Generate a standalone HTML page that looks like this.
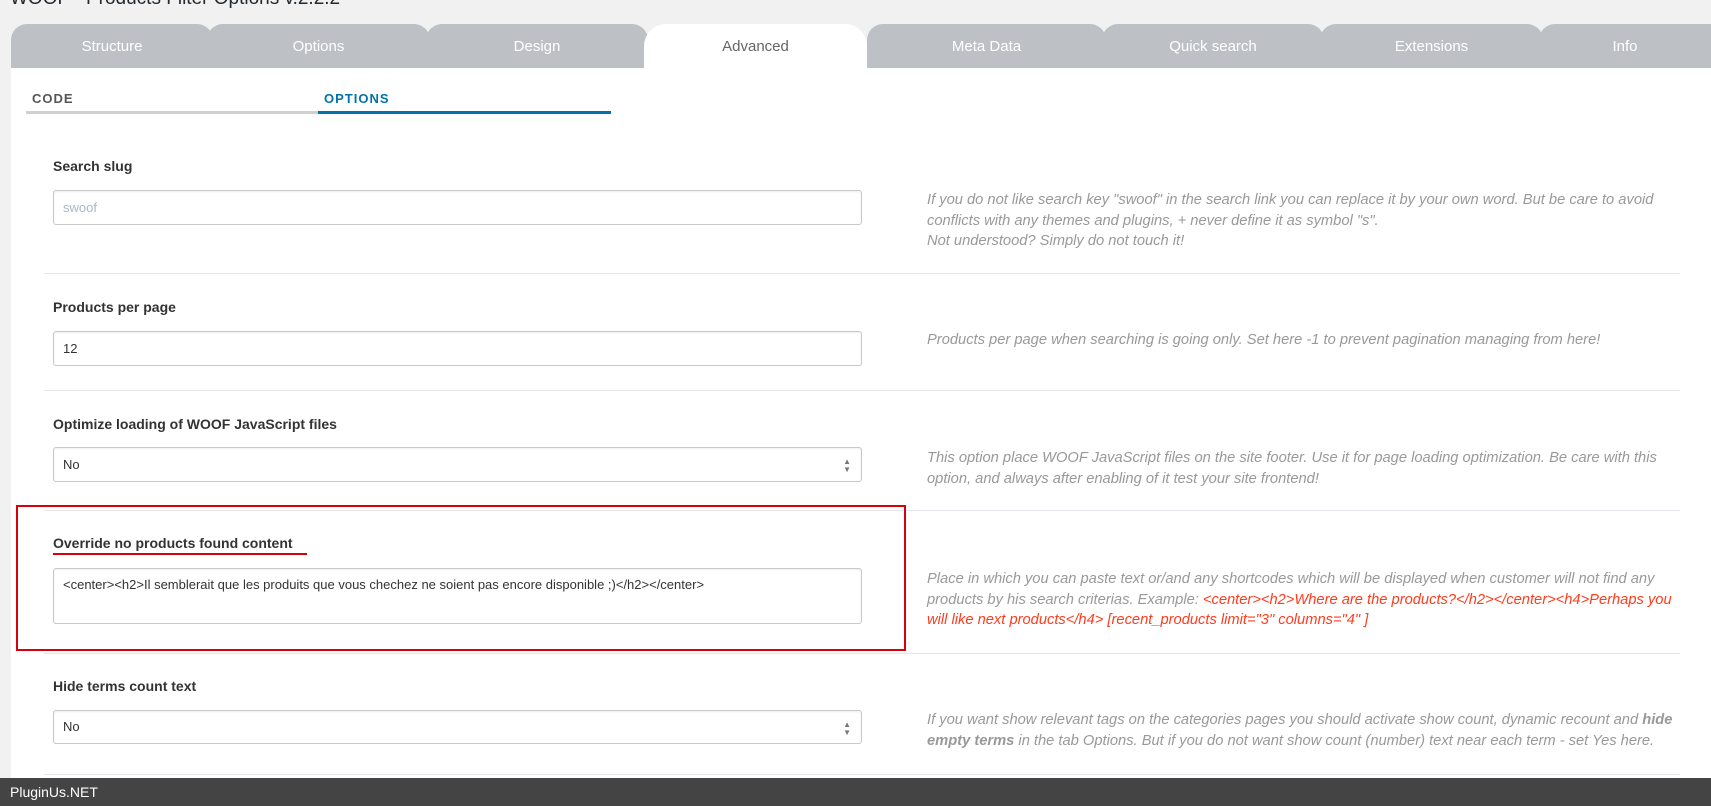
<!DOCTYPE html>
<html><head><meta charset="utf-8"><style>
*{margin:0;padding:0;box-sizing:border-box}
body{width:1711px;height:806px;background:#f1f1f1;font-family:"Liberation Sans",sans-serif;position:relative;overflow:hidden}
.abs{position:absolute}
.title{left:10px;top:-12px;font-size:19px;color:#23282d}
.tab{position:absolute;top:24px;height:44px;background:#bdc1c6;color:#fff;font-size:15px;text-align:center;line-height:46px;border-radius:16px 16px 0 0}
.tab.act{background:#fff;color:#666}
.panel{left:11px;top:68px;width:1700px;height:710px;background:#fff}
.sub{font-size:13px;font-weight:bold;letter-spacing:1px;top:91px}
.lbl{left:53px;font-size:14px;font-weight:bold;color:#333}
.inp{left:53px;width:809px;border:1px solid #c8c8c8;border-radius:3px;background:#fff;font-size:13px;color:#333;padding-left:9px;box-shadow:inset 0 1px 2px rgba(0,0,0,.07)}
.help{left:927px;font-size:14.7px;font-style:italic;color:#999;line-height:20.5px;white-space:nowrap}
.sep{left:44px;width:1636px;height:1px;background:#e4e8ec}
.arr{position:absolute;right:10px;top:10px;font-size:8px;color:#777;line-height:8px}
.red{color:#ff3c1e}
</style></head><body>
<div class="abs title">WOOF - Products Filter Options v.2.2.2</div>
<div class="abs panel"></div>
<div class="tab" style="left:11px;width:202px">Structure</div>
<div class="tab" style="left:207px;width:223px">Options</div>
<div class="tab" style="left:426px;width:222px">Design</div>
<div class="tab" style="left:867px;width:239px">Meta Data</div>
<div class="tab" style="left:1102px;width:222px">Quick search</div>
<div class="tab" style="left:1320px;width:223px">Extensions</div>
<div class="tab" style="left:1539px;width:172px;border-radius:16px 0 0 0">Info</div>
<div class="tab act" style="left:644px;width:223px;border-radius:22px 22px 0 0">Advanced</div>

<div class="abs sub" style="left:32px;color:#555">CODE</div>
<div class="abs sub" style="left:324px;color:#0073aa">OPTIONS</div>
<div class="abs" style="left:26px;top:111px;width:292px;height:3px;background:#d0d0d0"></div>
<div class="abs" style="left:318px;top:111px;width:293px;height:3px;background:#0073aa"></div>

<div class="abs lbl" style="top:158px">Search slug</div>
<div class="abs inp" style="top:190px;height:35px;line-height:33px;color:#a9b8c8">swoof</div>
<div class="abs help" style="top:190px">If you do not like search key "swoof" in the search link you can replace it by your own word. But be care to avoid<br>conflicts with any themes and plugins, + never define it as symbol "s".<br>Not understood? Simply do not touch it!</div>
<div class="abs sep" style="top:273px"></div>

<div class="abs lbl" style="top:299px">Products per page</div>
<div class="abs inp" style="top:331px;height:35px;line-height:33px">12</div>
<div class="abs help" style="top:330px">Products per page when searching is going only. Set here -1 to prevent pagination managing from here!</div>
<div class="abs sep" style="top:390px"></div>

<div class="abs lbl" style="top:416px">Optimize loading of WOOF JavaScript files</div>
<div class="abs inp" style="top:447px;height:35px;line-height:33px">No<div class="arr">▲<br>▼</div></div>
<div class="abs help" style="top:448px">This option place WOOF JavaScript files on the site footer. Use it for page loading optimization. Be care with this<br>option, and always after enabling of it test your site frontend!</div>
<div class="abs sep" style="top:510px"></div>

<div class="abs" style="left:16px;top:505px;width:890px;height:146px;border:2px solid #d9000d"></div>
<div class="abs lbl" style="top:535px">Override no products found content</div>
<div class="abs" style="left:53px;top:553px;width:254px;height:2px;background:#d9000d"></div>
<div class="abs inp" style="top:568px;height:56px;padding-top:8px;font-size:13px">&lt;center&gt;&lt;h2&gt;Il semblerait que les produits que vous chechez ne soient pas encore disponible ;)&lt;/h2&gt;&lt;/center&gt;</div>
<div class="abs help" style="top:569px">Place in which you can paste text or/and any shortcodes which will be displayed when customer will not find any<br>products by his search criterias. Example: <span class="red">&lt;center&gt;&lt;h2&gt;Where are the products?&lt;/h2&gt;&lt;/center&gt;&lt;h4&gt;Perhaps you</span><br><span class="red">will like next products&lt;/h4&gt; [recent_products limit="3" columns="4" ]</span></div>
<div class="abs sep" style="top:653px"></div>

<div class="abs lbl" style="top:678px">Hide terms count text</div>
<div class="abs inp" style="top:710px;height:34px;line-height:32px">No<div class="arr">▲<br>▼</div></div>
<div class="abs help" style="top:710px">If you want show relevant tags on the categories pages you should activate show count, dynamic recount and <b>hide</b><br><b>empty terms</b> in the tab Options. But if you do not want show count (number) text near each term - set Yes here.</div>
<div class="abs sep" style="top:774px"></div>

<div class="abs" style="left:0;top:778px;width:1711px;height:28px;background:#444;color:#fff;font-size:14px;line-height:28px;padding-left:10px">PluginUs.NET</div>
</body></html>
